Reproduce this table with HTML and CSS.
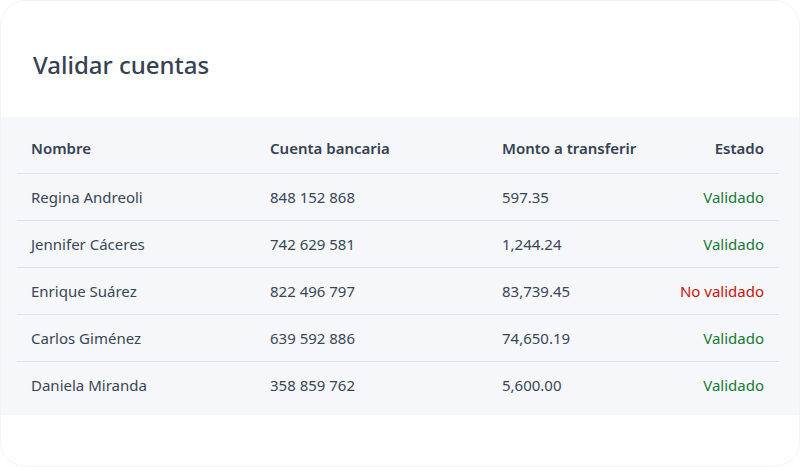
FILE: index.html
```html
<!DOCTYPE html>
<html lang="es">
<head>
<meta charset="utf-8">
<link rel="stylesheet" href="styles.css">
</head>
<body>
<div class="card">
  <h1 class="title">Validar cuentas</h1>
  <div class="panel">
    <table class="tbl">
      <thead>
        <tr><th>Nombre</th><th>Cuenta bancaria</th><th>Monto a transferir</th><th class="r">Estado</th></tr>
      </thead>
      <tbody>
        <tr><td>Regina Andreoli</td><td>848 152 868</td><td>597.35</td><td class="r ok">Validado</td></tr>
        <tr><td>Jennifer Cáceres</td><td>742 629 581</td><td>1,244.24</td><td class="r ok">Validado</td></tr>
        <tr><td>Enrique Suárez</td><td>822 496 797</td><td>83,739.45</td><td class="r bad">No validado</td></tr>
        <tr><td>Carlos Giménez</td><td>639 592 886</td><td>74,650.19</td><td class="r ok">Validado</td></tr>
        <tr><td>Daniela Miranda</td><td>358 859 762</td><td>5,600.00</td><td class="r ok">Validado</td></tr>
      </tbody>
    </table>
  </div>
</div>
</body>
</html>
```
FILE: styles.css
```css
html, body { margin: 0; padding: 0; background: #ffffff; }
body { font-family: "Noto Sans", "DejaVu Sans", sans-serif; color: #3a4657; }
.card {
  width: 800px; height: 467px; box-sizing: border-box;
  border: 1px solid #f3f3f3; border-radius: 26px; background: #fff;
  overflow: hidden; padding-top: 47px;
}
.title {
  margin: 0 0 0 32px; font-size: 24px; font-weight: 500; line-height: 34px;
  color: #364152; letter-spacing: 0;
}
.panel {
  margin-top: 35px; background: #f5f7fa; padding: 5px 20px 0 16px;
  height: 298px; box-sizing: border-box;
}
.tbl { width: 100%; border-collapse: collapse; font-size: 15px; }
.tbl th { font-weight: 600; text-align: left; height: 51px; padding: 0 0 0 14px; color: #364152; }
.tbl td { height: 46px; padding: 0 0 0 14px; border-top: 1px solid #d7e3f0; }
.tbl th:nth-child(1) { width: 225px; }
.tbl th:nth-child(2) { width: 218px; }
.tbl .r { text-align: right; padding-right: 15px; }
.ok { color: #157a35; }
.bad { color: #c8130e; }
```
